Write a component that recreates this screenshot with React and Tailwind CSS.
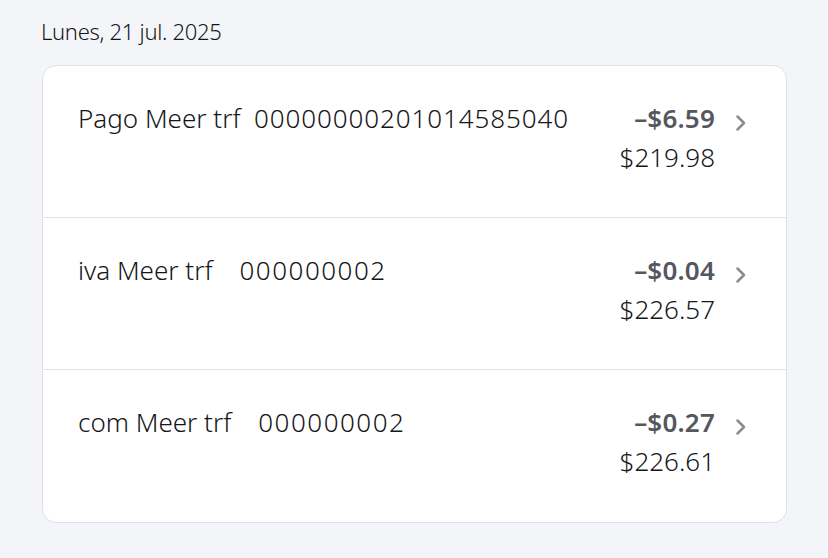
import React from "react";

const rows = [
  { label: "Pago Meer trf  ", code: "00000000201014585040", amount: "–$6.59", balance: "$219.98", track: "tracking-[0.9px]" },
  { label: "iva Meer trf    ", code: "000000002", amount: "–$0.04", balance: "$226.57", track: "tracking-[1.5px]" },
  { label: "com Meer trf    ", code: "000000002", amount: "–$0.27", balance: "$226.61", track: "tracking-[1.5px]" },
];

function Chevron() {
  return (
    <svg width="16" height="20" viewBox="0 0 16 20" fill="none" className="shrink-0">
      <path d="M4.5 3.5 L11 10 L4.5 16.5" stroke="#8b8d93" strokeWidth="2.5" strokeLinecap="round" strokeLinejoin="round" />
    </svg>
  );
}

export default function App() {
  return (
    <div
      className="min-h-[558px] w-[828px] bg-[#f4f5f9] pl-[41px] pr-[41px] pt-[15px]"
      style={{ fontFamily: '"Noto Sans", "Open Sans", sans-serif' }}
    >
      <div className="text-[22px] font-[340] leading-[32px] tracking-[-0.3px] text-[#141519]">Lunes, 21 jul. 2025</div>
      <div className="mt-[18px] ml-[1px] w-[745px] rounded-[14px] border border-[#dfe1e8] bg-white">
        {rows.map((r, i) => (
          <div
            key={i}
            className={`flex items-start pl-[35px] pr-[37px] pt-[33px] ${i < rows.length - 1 ? "border-b border-[#e1e3ea] pb-[40px]" : "pb-[41px]"}`}
          >
            <div className="flex-1 whitespace-pre text-[26px] font-[340] leading-[39px] text-[#15161a]">
              {r.label}
              <span className={r.track}>{r.code}</span>
            </div>
            <div className="flex flex-col items-end">
              <div className="text-[26px] font-[580] leading-[39px] tracking-[0.2px] text-[#55575e]">{r.amount}</div>
              <div className="text-[26px] font-[340] leading-[39px] text-[#15161a]">{r.balance}</div>
            </div>
            <div className="ml-[18px] flex h-[39px] items-center pt-[8px]">
              <Chevron />
            </div>
          </div>
        ))}
      </div>
    </div>
  );
}
